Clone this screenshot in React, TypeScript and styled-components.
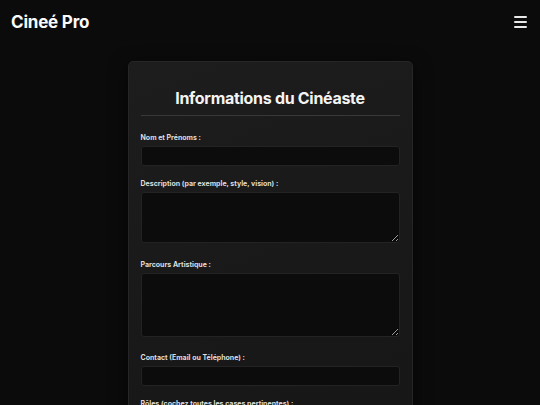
import React from 'react';
import styled, { createGlobalStyle } from 'styled-components';

const GlobalStyle = createGlobalStyle`
    html {
        scrollbar-width: none;
    }
    body {
        margin: 0;
        background: #0b0b0b;
        color: #f2f2f2;
        font-family: Inter, "Noto Sans", "Liberation Sans", sans-serif;
    }
    * {
        box-sizing: border-box;
    }
`

const Header = styled.header`
    height: 44px;
    padding: 0 13px 0 11px;
    display: flex;
    align-items: center;
    justify-content: space-between;
    background: #0b0b0b;
`

const Logo = styled.div`
    font-size: 17px;
    font-weight: 700;
    letter-spacing: -0.2px;
    color: #fafafa;
`

const Burger = styled.button`
    display: flex;
    flex-direction: column;
    gap: 3px;
    padding: 0;
    background: none;
    border: none;
    cursor: pointer;
    span {
        display: block;
        width: 13px;
        height: 2px;
        border-radius: 1px;
        background: #e8e8e8;
    }
`

const Main = styled.main`
    padding: 17px 0 40px;
    display: flex;
    justify-content: center;
`

const Card = styled.form`
    width: 285px;
    padding: 14px 12px 20px;
    border-radius: 5px;
    border: 1px solid #262626;
    background: linear-gradient(160deg, #1d1d1d 0%, #181818 60%, #161616 100%);
    box-shadow: 0 4px 18px rgba(0, 0, 0, 0.6);
`

const Title = styled.h2`
    margin: 12px 0 17px;
    padding-bottom: 7px;
    border-bottom: 1px solid #383838;
    text-align: center;
    font-size: 16px;
    font-weight: 700;
    letter-spacing: -0.3px;
    line-height: 20px;
    color: #f4f4f4;
`

const Field = styled.div<{ $gap?: number }>`
    display: flex;
    flex-direction: column;
    margin-bottom: ${p => p.$gap ?? 13}px;
`

const Label = styled.label`
    display: block;
    margin-bottom: 4px;
    font-size: 7px;
    line-height: 9px;
    font-weight: 700;
    color: #dedede;
`

const Input = styled.input`
    display: block;
    width: 100%;
    height: 20px;
    padding: 0 6px;
    border: 1px solid #232323;
    border-radius: 3px;
    background: #0c0c0c;
    color: #eee;
    font: inherit;
    font-size: 8px;
    outline: none;
`

const TextArea = styled.textarea<{ $h: number }>`
    display: block;
    width: 100%;
    height: ${p => p.$h}px;
    padding: 5px 6px;
    border: 1px solid #232323;
    border-radius: 3px;
    background: #0c0c0c;
    color: #eee;
    font: inherit;
    font-size: 8px;
    resize: vertical;
    outline: none;
`

const Checks = styled.div`
    display: flex;
    flex-direction: column;
    gap: 5px;
`

const Check = styled.label`
    display: flex;
    align-items: center;
    gap: 5px;
    font-size: 7px;
    color: #ddd;
    input {
        margin: 0;
        width: 9px;
        height: 9px;
    }
`

const roles = ['Réalisateur', 'Scénariste', 'Producteur', 'Directeur de la photographie', 'Monteur', 'Acteur']

export default function App() {
    return (
        <>
            <GlobalStyle />
            <Header>
                <Logo>Cineé Pro</Logo>
                <Burger aria-label="Menu">
                    <span />
                    <span />
                    <span />
                </Burger>
            </Header>
            <Main>
                <Card onSubmit={e => e.preventDefault()}>
                    <Title>Informations du Cinéaste</Title>
                    <Field>
                        <Label htmlFor="nom">Nom et Prénoms :</Label>
                        <Input id="nom" type="text" />
                    </Field>
                    <Field $gap={17}>
                        <Label htmlFor="desc">Description (par exemple, style, vision) :</Label>
                        <TextArea id="desc" $h={51} />
                    </Field>
                    <Field $gap={16}>
                        <Label htmlFor="parcours">Parcours Artistique :</Label>
                        <TextArea id="parcours" $h={64} />
                    </Field>
                    <Field>
                        <Label htmlFor="contact">Contact (Email ou Téléphone) :</Label>
                        <Input id="contact" type="text" />
                    </Field>
                    <Field>
                        <Label>Rôles (cochez toutes les cases pertinentes) :</Label>
                        <Checks>
                            {roles.map(r =>
                                <Check key={r}>
                                    <input type="checkbox" />
                                    {r}
                                </Check>)}
                        </Checks>
                    </Field>
                </Card>
            </Main>
        </>
    )
}
